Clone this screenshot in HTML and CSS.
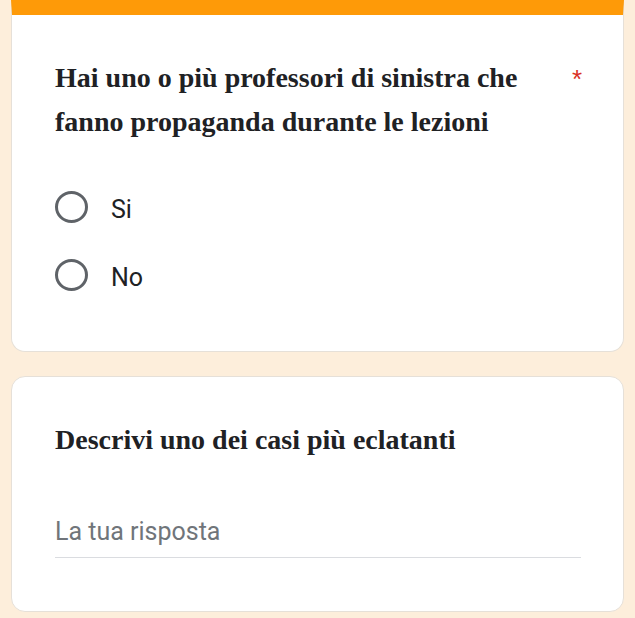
FILE: index.html
```html
<!DOCTYPE html>
<html lang="it">
<head>
<meta charset="utf-8">
<link rel="stylesheet" href="styles.css">
</head>
<body>
<div class="page">
  <section class="card card-first">
    <div class="q-head">
      <h2 class="q-title">Hai uno o più professori di sinistra che fanno propaganda durante le lezioni</h2>
      <span class="req">*</span>
    </div>
    <div class="options">
      <label class="opt"><span class="radio"></span><span class="opt-label">Si</span></label>
      <label class="opt"><span class="radio"></span><span class="opt-label">No</span></label>
    </div>
  </section>
  <section class="card card-second">
    <h2 class="q-title">Descrivi uno dei casi più eclatanti</h2>
    <div class="answer">La tua risposta</div>
  </section>
</div>
</body>
</html>
```
FILE: styles.css
```css
html, body {
  margin: 0;
  padding: 0;
  background: #fdeedb;
}
.page {
  display: flex;
  flex-direction: column;
  gap: 24px;
  padding: 0 11px;
}
.card {
  background: #ffffff;
  border: 1px solid #e6e0d8;
  box-sizing: border-box;
  padding: 0 41px 0 43px;
}
.card-first {
  border-top: 15px solid #fe9a08;
  border-radius: 0 0 14px 14px;
  height: 352px;
  padding-top: 41px;
}
.card-second {
  border-radius: 14px;
  height: 236px;
  padding-top: 43px;
}
.q-head {
  display: flex;
  justify-content: space-between;
  align-items: flex-start;
}
.q-title {
  margin: 0;
  font-family: "Liberation Serif", "Times New Roman", serif;
  font-weight: bold;
  font-size: 28px;
  line-height: 44px;
  color: #202124;
  max-width: 480px;
}
.card-second .q-title {
  line-height: 40px;
}
.req {
  font-family: "Liberation Sans", Arial, sans-serif;
  color: #d93025;
  font-size: 26px;
  line-height: 30px;
  margin-top: 8px;
}
.options {
  display: flex;
  flex-direction: column;
  gap: 36px;
  margin-top: 47px;
}
.opt {
  display: flex;
  align-items: flex-start;
  gap: 23px;
  height: 32px;
}
.radio {
  width: 33px;
  height: 32px;
  box-sizing: border-box;
  border: 3px solid #5f6368;
  border-radius: 50%;
}
.opt-label {
  font-family: Roboto, "Noto Sans", sans-serif;
  font-size: 25px;
  line-height: 32px;
  padding-top: 3px;
  color: #202124;
}
.answer {
  margin-top: 57px;
  width: 526px;
  font-family: Roboto, "Noto Sans", sans-serif;
  font-size: 25px;
  line-height: 30px;
  color: #70757a;
  padding-bottom: 10px;
  border-bottom: 1px solid #dadce0;
}
```
